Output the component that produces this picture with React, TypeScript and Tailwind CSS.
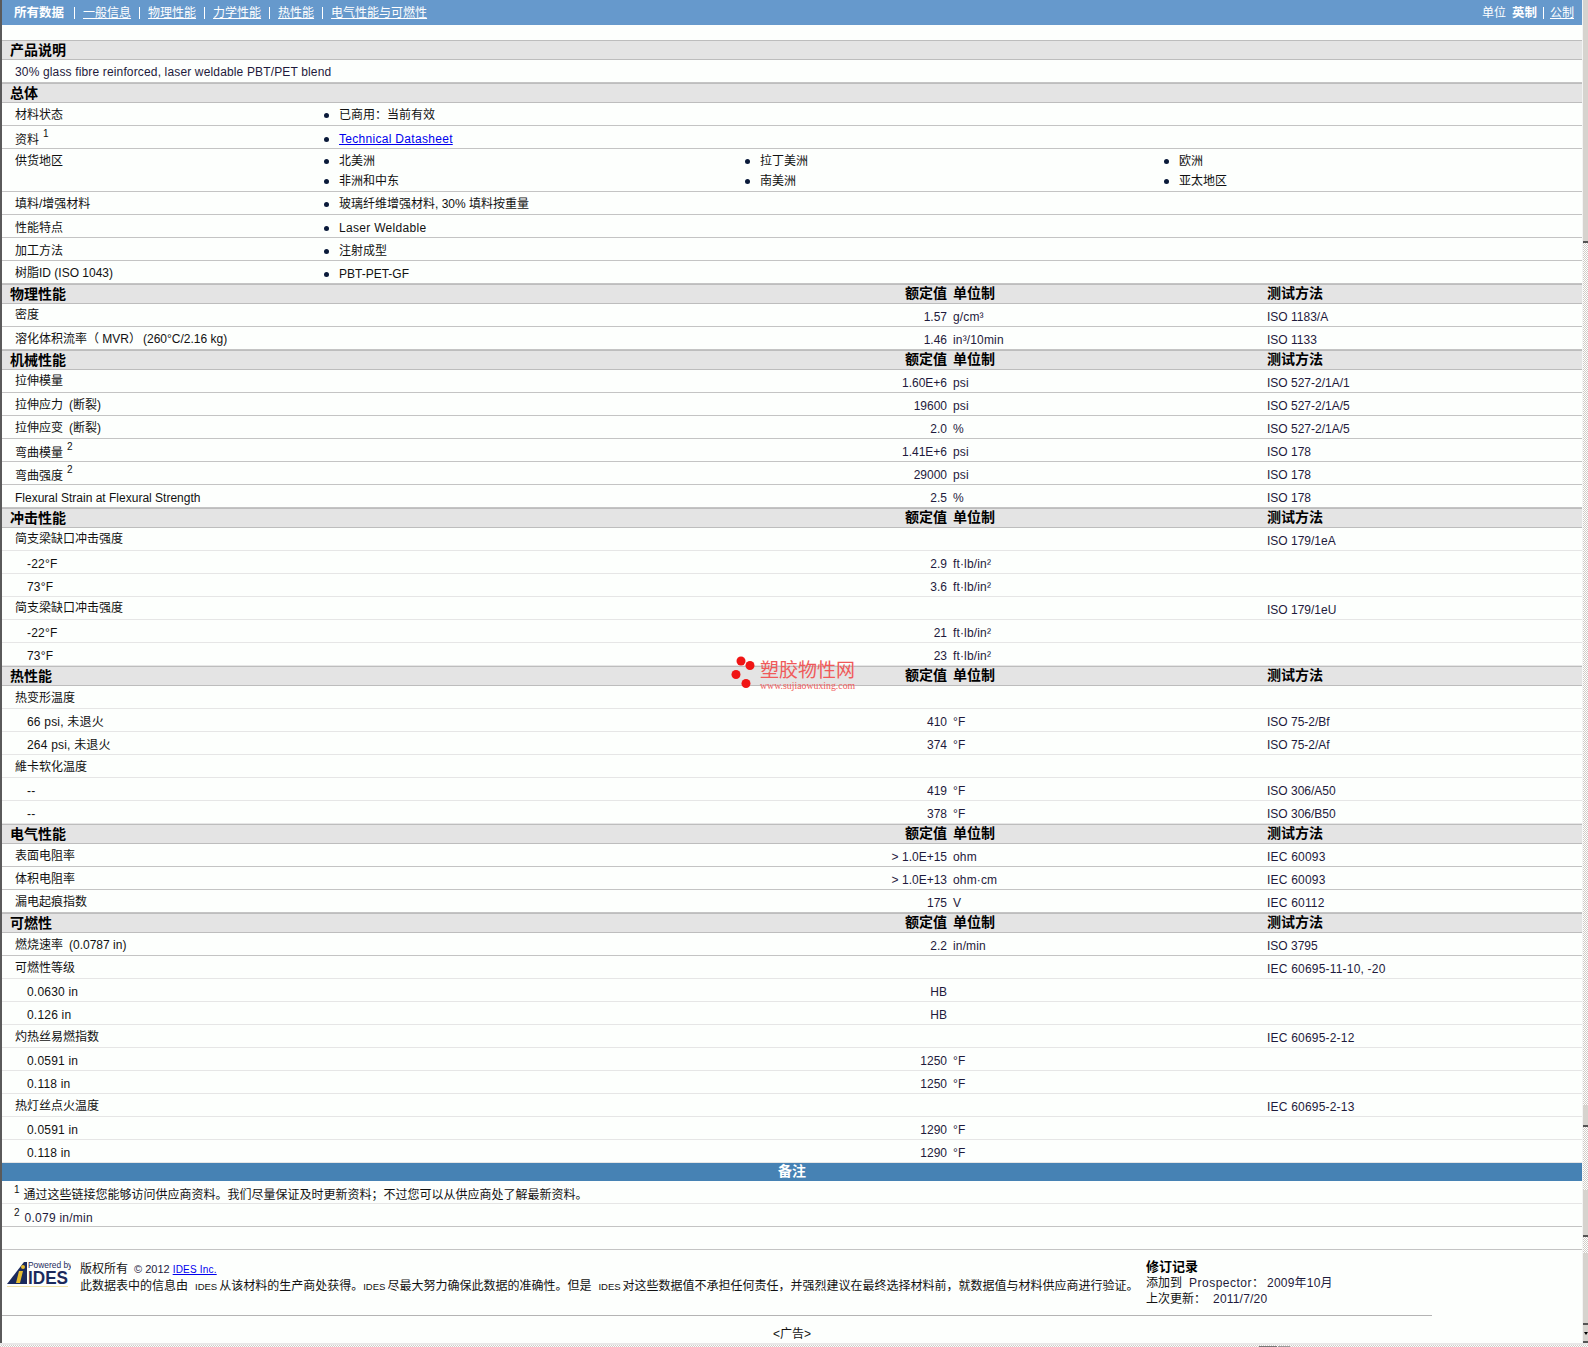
import type { ReactNode } from 'react';

const font = 'font-["Liberation_Sans","Noto_Sans_CJK_SC",sans-serif]';

type Row = {
  label: string;
  sup?: string;
  extra?: string;
  tight?: boolean;
  high?: boolean;
  sub?: boolean;
  value?: string;
  unit?: string;
  method?: string;
};

type Section = { title: string; rows: Row[] };

const sections: Section[] = [
  {
    title: '物理性能',
    rows: [
      { label: '密度', high: true, value: '1.57', unit: 'g/cm³', method: 'ISO 1183/A' },
      { label: '溶化体积流率（ MVR）', extra: '(260°C/2.16 kg)', tight: true, value: '1.46', unit: 'in³/10min', method: 'ISO 1133' },
    ],
  },
  {
    title: '机械性能',
    rows: [
      { label: '拉伸模量', high: true, value: '1.60E+6', unit: 'psi', method: 'ISO 527-2/1A/1' },
      { label: '拉伸应力', extra: '(断裂)', value: '19600', unit: 'psi', method: 'ISO 527-2/1A/5' },
      { label: '拉伸应变', extra: '(断裂)', value: '2.0', unit: '%', method: 'ISO 527-2/1A/5' },
      { label: '弯曲模量', sup: '2', value: '1.41E+6', unit: 'psi', method: 'ISO 178' },
      { label: '弯曲强度', sup: '2', value: '29000', unit: 'psi', method: 'ISO 178' },
      { label: 'Flexural Strain at Flexural Strength', value: '2.5', unit: '%', method: 'ISO 178' },
    ],
  },
  {
    title: '冲击性能',
    rows: [
      { label: '简支梁缺口冲击强度', high: true, method: 'ISO 179/1eA' },
      { label: '-22°F', sub: true, value: '2.9', unit: 'ft·lb/in²' },
      { label: '73°F', sub: true, value: '3.6', unit: 'ft·lb/in²' },
      { label: '简支梁缺口冲击强度', high: true, method: 'ISO 179/1eU' },
      { label: '-22°F', sub: true, value: '21', unit: 'ft·lb/in²' },
      { label: '73°F', sub: true, value: '23', unit: 'ft·lb/in²' },
    ],
  },
  {
    title: '热性能',
    rows: [
      { label: '热变形温度' },
      { label: '66 psi, 未退火', sub: true, value: '410', unit: '°F', method: 'ISO 75-2/Bf' },
      { label: '264 psi, 未退火', sub: true, value: '374', unit: '°F', method: 'ISO 75-2/Af' },
      { label: '維卡软化温度' },
      { label: '--', sub: true, value: '419', unit: '°F', method: 'ISO 306/A50' },
      { label: '--', sub: true, value: '378', unit: '°F', method: 'ISO 306/B50' },
    ],
  },
  {
    title: '电气性能',
    rows: [
      { label: '表面电阻率', value: '> 1.0E+15', unit: 'ohm', method: 'IEC 60093' },
      { label: '体积电阻率', value: '> 1.0E+13', unit: 'ohm·cm', method: 'IEC 60093' },
      { label: '漏电起痕指数', value: '175', unit: 'V', method: 'IEC 60112' },
    ],
  },
  {
    title: '可燃性',
    rows: [
      { label: '燃烧速率', extra: '(0.0787 in)', value: '2.2', unit: 'in/min', method: 'ISO 3795' },
      { label: '可燃性等级', method: 'IEC 60695-11-10, -20' },
      { label: '0.0630 in', sub: true, value: 'HB' },
      { label: '0.126 in', sub: true, value: 'HB' },
      { label: '灼热丝易燃指数', method: 'IEC 60695-2-12' },
      { label: '0.0591 in', sub: true, value: '1250', unit: '°F' },
      { label: '0.118 in', sub: true, value: '1250', unit: '°F' },
      { label: '热灯丝点火温度', method: 'IEC 60695-2-13' },
      { label: '0.0591 in', sub: true, value: '1290', unit: '°F' },
      { label: '0.118 in', sub: true, value: '1290', unit: '°F' },
    ],
  },
];

function Bullet({ children, drop }: { children: ReactNode; drop?: boolean }) {
  return (
    <div className={`flex items-center h-[20px] ${drop ? 'pt-[2px]' : ''}`}>
      <span className="w-[5px] h-[5px] rounded-full bg-[#0a1a3a] mr-[10px] shrink-0" />
      <span className="whitespace-nowrap">{children}</span>
    </div>
  );
}

function NavBar() {
  return <span className="w-px h-[12px] bg-white" />;
}

function SectionHead({ title, cols }: { title: string; cols?: boolean }) {
  return (
    <div className="flex items-center h-[20px] shrink-0 bg-[#e4e4e4] border-t border-b border-[#bdbdbd] font-bold text-black text-[14px] whitespace-nowrap">
      <span className="w-[898px] shrink-0 pl-[8px]">{title}</span>
      {cols && (
        <>
          <span className="w-[47px] shrink-0 flex justify-end -translate-y-px">额定值</span>
          <span className="w-[320px] shrink-0 pl-[6px] -translate-y-px">单位制</span>
          <span className="-translate-y-px">测试方法</span>
        </>
      )}
    </div>
  );
}

function GeneralRow({ label, sup, low, h = 'h-[23px]', children }: { label: string; sup?: string; low?: boolean; h?: string; children: ReactNode }) {
  return (
    <div className={`flex shrink-0 border-b border-[#c4c4c4] ${h}`}>
      <div className={`w-[322px] pl-[13px] shrink-0 ${sup ? 'pt-[7px]' : low ? 'pt-[6px]' : 'pt-[5px]'}`}>
        {label}
        {sup && <sup className="ml-[4px] text-[10px] -top-[7px]">{sup}</sup>}
      </div>
      <div className="flex flex-col pt-[2px]">{children}</div>
    </div>
  );
}

function DataRow({ row, strong }: { row: Row; strong?: boolean }) {
  const latin = /^[\x00-\x7f°]+$/.test(row.label);
  let labelPad = 'pt-[5px]';
  if (row.sup) labelPad = 'pt-[7px]';
  else if (latin || row.sub) labelPad = 'pt-[6px]';
  else if (row.high) labelPad = 'pt-[4px]';
  return (
    <div className={`flex h-[23px] border-b whitespace-nowrap ${strong ? 'border-[#c4c4c4]' : 'border-[#e6e6e6]'}`}>
      <div className={`w-[898px] shrink-0 ${labelPad} ${row.sub ? 'pl-[25px] tracking-[0.2px]' : 'pl-[13px]'}`}>
        {row.label}
        {row.sup && <sup className="ml-[4px] text-[10px] -top-[7px]">{row.sup}</sup>}
        {row.extra && <span className={row.tight ? 'ml-[2px]' : 'ml-[6px]'}>{row.extra}</span>}
      </div>
      <div className="w-[47px] shrink-0 flex justify-end pt-[6px] text-[#1e1a3c]">{row.value}</div>
      <div className="w-[320px] pl-[6px] shrink-0 pt-[6px] text-[#1e1a3c] tracking-[0.15px]">{row.unit}</div>
      <div className={`pt-[6px] text-[#1e1a3c] ${row.method?.startsWith('IEC') ? 'tracking-[0.2px]' : ''}`}>{row.method}</div>
    </div>
  );
}

function Ides({ first }: { first?: boolean }) {
  return <span className={`text-[9.5px] mr-[2px] ${first ? '' : 'ml-[7px]'}`}>IDES</span>;
}

function ScrollThumb({ h }: { h: string }) {
  return <div className={`${h} shrink-0 bg-[#d6d3ce] border-b-2 border-[#555]`} />;
}

export default function App() {
  return (
    <div className={`${font} w-[1588px] h-[1347px] overflow-hidden flex flex-col bg-[#d6d3ce] text-[12px] leading-[14px] text-[#111]`}>
      <div className="flex h-[1343px] shrink-0">
        <div className="flex flex-col w-[1582px] h-full bg-[#fdfffd] border-l-2 border-[#5a5a5a] relative">
          <div className="flex items-center justify-between h-[25px] bg-[#6699cc] text-white pl-[12px] pr-[8px] shrink-0">
            <div className="flex items-center">
              <span className="font-bold text-[12.5px] mr-[2px]">所有数据</span>
              {['一般信息', '物理性能', '力学性能', '热性能', '电气性能与可燃性'].map((t) => (
                <span key={t} className="flex items-center">
                  <span className="mx-[8px] flex items-center">
                    <NavBar />
                  </span>
                  <a className="underline">{t}</a>
                </span>
              ))}
            </div>
            <div className="flex items-center">
              <span>单位</span>
              <span className="font-bold text-[12.5px] ml-[6px]">英制</span>
              <span className="mx-[6px] flex items-center">
                <NavBar />
              </span>
              <a className="underline">公制</a>
            </div>
          </div>
          <div className="h-[15px] shrink-0" />
          <SectionHead title="产品说明" />
          <div className="h-[23px] shrink-0 pl-[13px] pt-[2px] flex items-center border-b border-[#c4c4c4] tracking-[0.15px] text-[#1e1a3c]">
            30% glass fibre reinforced, laser weldable PBT/PET blend
          </div>
          <SectionHead title="总体" />
          <GeneralRow label="材料状态">
            <Bullet>已商用：当前有效</Bullet>
          </GeneralRow>
          <GeneralRow label="资料" sup="1">
            <Bullet drop>
              <a className="underline text-[#0000ee] tracking-[0.3px]">Technical Datasheet</a>
            </Bullet>
          </GeneralRow>
          <GeneralRow label="供货地区" h="h-[43px]">
            <div className="grid grid-cols-[421px_419px_auto]">
              {['北美洲', '拉丁美洲', '欧洲', '非洲和中东', '南美洲', '亚太地区'].map((t) => (
                <Bullet key={t}>{t}</Bullet>
              ))}
            </div>
          </GeneralRow>
          <GeneralRow label="填料/增强材料">
            <Bullet>玻璃纤维增强材料, 30% 填料按重量</Bullet>
          </GeneralRow>
          <GeneralRow label="性能特点" low>
            <Bullet drop>
              <span className="tracking-[0.3px]">Laser Weldable</span>
            </Bullet>
          </GeneralRow>
          <GeneralRow label="加工方法" low>
            <Bullet drop>注射成型</Bullet>
          </GeneralRow>
          <GeneralRow label="树脂ID (ISO 1043)">
            <Bullet drop>PBT-PET-GF</Bullet>
          </GeneralRow>
          {sections.map((s) => (
            <div key={s.title} className="flex flex-col shrink-0">
              <SectionHead title={s.title} cols />
              {s.rows.map((r, i) => (
                <DataRow key={i} row={r} strong={!r.sub && !!r.value} />
              ))}
            </div>
          ))}
          <div className="h-[18px] bg-[#4682b4] text-white font-bold text-[14px] flex items-center justify-center shrink-0 pb-[3px]">
            备注
          </div>
          <div className="h-[23px] pl-[12px] pt-[7px] border-b border-[#e6e6e6] shrink-0 whitespace-nowrap">
            <sup className="text-[10px] mr-[4px] -top-[6px]">1</sup>
            通过这些链接您能够访问供应商资料。我们尽量保证及时更新资料；不过您可以从供应商处了解最新资料。
          </div>
          <div className="h-[23px] pl-[12px] pt-[7px] border-b border-[#c4c4c4] shrink-0 whitespace-nowrap">
            <sup className="text-[10px] mr-[5px] -top-[6px]">2</sup>
            <span className="tracking-[0.25px] text-[#1e1a3c]">0.079 in/min</span>
          </div>
          <div className="h-[23px] border-b border-[#c4c4c4] shrink-0" />
          <div className="flex pt-[10px] h-[66px] w-[1430px] border-b border-[#b4b4b4] shrink-0">
            <svg className="w-[64px] h-[29px] ml-[5px] mr-[9px] shrink-0" viewBox="0 0 64 29">
              <path d="M0 24 L17 2 L20 2 L20 24 Z" fill="#1b2a5c" />
              <path d="M9 23 L12 11 L16 11 L13 23 Z" fill="#e6bb2e" />
              <circle cx="16" cy="7" r="2" fill="#e6bb2e" />
              <text x="21" y="8" fontSize="8.4" fill="#1b2a5c" fontFamily="Liberation Sans">
                Powered by
              </text>
              <text x="21" y="24" fontSize="18" fontWeight="bold" fill="#1b2a5c" fontFamily="Liberation Sans" textLength="40" lengthAdjust="spacingAndGlyphs">
                IDES
              </text>
              <rect x="0" y="26" width="61" height="1" fill="#f0e2a8" />
            </svg>
            <div className="w-[1066px] shrink-0 leading-[16px] pt-[1px]">
              <div className="whitespace-nowrap">
                版权所有
                <span className="text-[11px] ml-[6px] mr-[3px] text-[#1e1a3c]">© 2012</span>
                <a className="underline text-[#0000ee] text-[10px] tracking-[0.2px]">IDES Inc.</a>
              </div>
              <div className="whitespace-nowrap">
                此数据表中的信息由
                <Ides />
                从该材料的生产商处获得。
                <Ides first />
                尽最大努力确保此数据的准确性。但是
                <Ides />
                对这些数据值不承担任何责任，并强烈建议在最终选择材料前，就数据值与材料供应商进行验证。
              </div>
            </div>
            <div className="leading-[16px] -mt-[1px] whitespace-nowrap">
              <div className="font-bold text-black text-[13px]">修订记录</div>
              <div>
                添加到
                <span className="ml-[7px] tracking-[0.5px] text-[#1e1a3c]">Prospector</span>：
                <span className="ml-[3px] tracking-[0.2px] text-[#1e1a3c]">2009年10月</span>
              </div>
              <div>
                上次更新：<span className="ml-[7px] tracking-[0.2px] text-[#1e1a3c]">2011/7/20</span>
              </div>
            </div>
          </div>
          <div className="flex-1 flex justify-center pt-[11px]">&lt;广告&gt;</div>
          {/* watermark */}
          <div className="absolute left-[729px] top-[656px] flex items-start pointer-events-none">
            <svg className="w-[26px] h-[34px]" viewBox="0 0 26 34">
              <circle cx="10" cy="5" r="4.5" fill="#f01515" />
              <circle cx="19" cy="9.5" r="4.5" fill="#f01515" />
              <circle cx="5" cy="18.5" r="4.5" fill="#f01515" />
              <circle cx="15" cy="27.5" r="4.5" fill="#f01515" />
            </svg>
            <div className="flex flex-col ml-[3px] pt-[8px] text-[#f05a5a] whitespace-nowrap">
              <span className="text-[19px] leading-[14px]">塑胶物性网</span>
              <span className="text-[9.8px] leading-[9px] mt-[3px] font-['Liberation_Serif',serif] font-medium">www.sujiaowuxing.com</span>
            </div>
          </div>
        </div>
        <div className="w-[6px] h-full flex flex-col bg-[repeating-conic-gradient(#cfccc6_0_25%,#ffffff_0_50%)] bg-[length:2px_2px] border-l border-[#f4f4f4]">
          <ScrollThumb h="h-[243px]" />
          <div className="h-[862px] shrink-0" />
          <ScrollThumb h="h-[22px]" />
          <div className="h-[63px] shrink-0" />
          <ScrollThumb h="h-[47px]" />
          <div className="h-[16px] shrink-0" />
          <ScrollThumb h="h-[72px]" />
          <div className="flex-1 bg-[#d6d3ce] border-b-2 border-[#555] flex items-center justify-center">
            <span className="w-0 h-0 border-x-[2px] border-x-transparent border-t-[3px] border-t-black" />
          </div>
        </div>
      </div>
      <div className="flex items-end h-[4px] bg-[repeating-conic-gradient(#cfccc6_0_25%,#ffffff_0_50%)] bg-[length:2px_2px] border-t-2 border-[#e8e8e8]">
        <span className="ml-[1259px] w-[18px] h-px bg-[#777]" />
        <span className="ml-[1px] w-[12px] h-px bg-[#999]" />
      </div>
    </div>
  );
}
